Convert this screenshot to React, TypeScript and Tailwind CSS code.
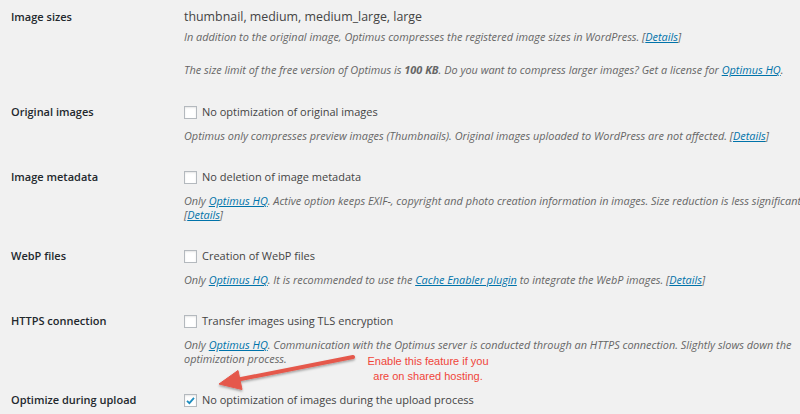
import React from 'react'

const font = { fontFamily: '"Open Sans", "Liberation Sans", sans-serif' }

function Link({ children }: { children: React.ReactNode }) {
  return <span className="text-[#0073aa] underline">{children}</span>
}

function Checkbox({ checked = false }: { checked?: boolean }) {
  return (
    <span className="inline-flex items-center justify-center w-[13px] h-[13px] bg-white border border-[#b4b9be] shadow-[inset_0_1px_2px_rgba(0,0,0,0.1)] mr-[5px] shrink-0">
      {checked && (
        <svg width="11" height="11" viewBox="0 0 11 11">
          <path d="M2 5.8 L4.4 8.2 L9 2.8" fill="none" stroke="#1e8cbe" strokeWidth="1.8" />
        </svg>
      )}
    </span>
  )
}

function Row({ label, first, children, last = false, top = 0 }: { label: string; first: React.ReactNode; children?: React.ReactNode; last?: boolean; top?: number }) {
  return (
    <div className={`flex ${last ? '' : 'pb-[25px]'}`} style={top ? { paddingTop: top } : undefined}>
      <div className="w-[184px] pl-[11px] shrink-0 text-[11px] leading-[18px] font-semibold text-[#23282d]">{label}</div>
      <div className="flex-1 min-w-0">
        <div className="flex items-center h-[18px] text-[11px] text-[#444] whitespace-nowrap">{first}</div>
        {children}
      </div>
    </div>
  )
}

function Desc({ children, mt = 8 }: { children: React.ReactNode; mt?: number }) {
  return (
    <div className="italic text-[10.9px] leading-[14px] text-[#666] whitespace-nowrap" style={{ marginTop: mt }}>
      {children}
    </div>
  )
}

export default function App() {
  return (
    <div className="relative w-[800px] h-[414px] overflow-hidden bg-[#f1f1f1]" style={font}>
      <Row label="Image sizes" first={<span className="text-[12.4px]">thumbnail, medium, medium_large, large</span>} top={8}>
        <Desc mt={4}>
          In addition to the original image, Optimus compresses the registered image sizes in WordPress. [<Link>Details</Link>]
        </Desc>
        <Desc mt={19}>
          The size limit of the free version of Optimus is <b>100 KB</b>. Do you want to compress larger images? Get a license for <Link>Optimus HQ</Link>.
        </Desc>
      </Row>
      <div className="h-px" />
      <Row label="Original images" first={<><Checkbox />No optimization of original images</>}>
        <Desc>
          Optimus only compresses preview images (Thumbnails). Original images uploaded to WordPress are not affected. [<Link>Details</Link>]
        </Desc>
      </Row>
      <Row label="Image metadata" first={<><Checkbox />No deletion of image metadata</>}>
        <Desc>
          Only <Link>Optimus HQ</Link>. Active option keeps EXIF-, copyright and photo creation information in images. Size reduction is less significant.
        </Desc>
        <Desc mt={0}>
          [<Link>Details</Link>]
        </Desc>
      </Row>
      <Row label="WebP files" first={<><Checkbox />Creation of WebP files</>}>
        <Desc>
          Only <Link>Optimus HQ</Link>. It is recommended to use the <Link>Cache Enabler plugin</Link> to integrate the WebP images. [<Link>Details</Link>]
        </Desc>
      </Row>
      <Row label="HTTPS connection" first={<><Checkbox />Transfer images using TLS encryption</>}>
        <Desc>
          Only <Link>Optimus HQ</Link>. Communication with the Optimus server is conducted through an HTTPS connection. Slightly slows down the
        </Desc>
        <Desc mt={0}>optimization process.</Desc>
      </Row>
      <Row label="Optimize during upload" first={<><Checkbox checked />No optimization of images during the upload process</>} last />

      <svg className="absolute left-0 top-0 pointer-events-none" width="800" height="414">
        <defs>
          <filter id="sh" x="-10%" y="-50%" width="120%" height="200%">
            <feDropShadow dx="0" dy="1.5" stdDeviation="1.2" floodColor="#000" floodOpacity="0.35" />
          </filter>
        </defs>
        <g filter="url(#sh)" fill="#e5584c" stroke="#e5584c">
          <line x1="353" y1="357" x2="236" y2="380" strokeWidth="4" strokeLinecap="round" />
          <polygon points="219,384 238,370.5 242,389.5" strokeWidth="1" strokeLinejoin="round" />
        </g>
      </svg>
      <div
        className="absolute left-[350px] top-[354px] w-[156px] text-center text-[11px] leading-[15px] text-[#f0453a]"
        style={{ fontFamily: '"Liberation Sans", Arial, sans-serif' }}
      >
        Enable this feature if you
        <br />
        are on shared hosting.
      </div>
    </div>
  )
}
